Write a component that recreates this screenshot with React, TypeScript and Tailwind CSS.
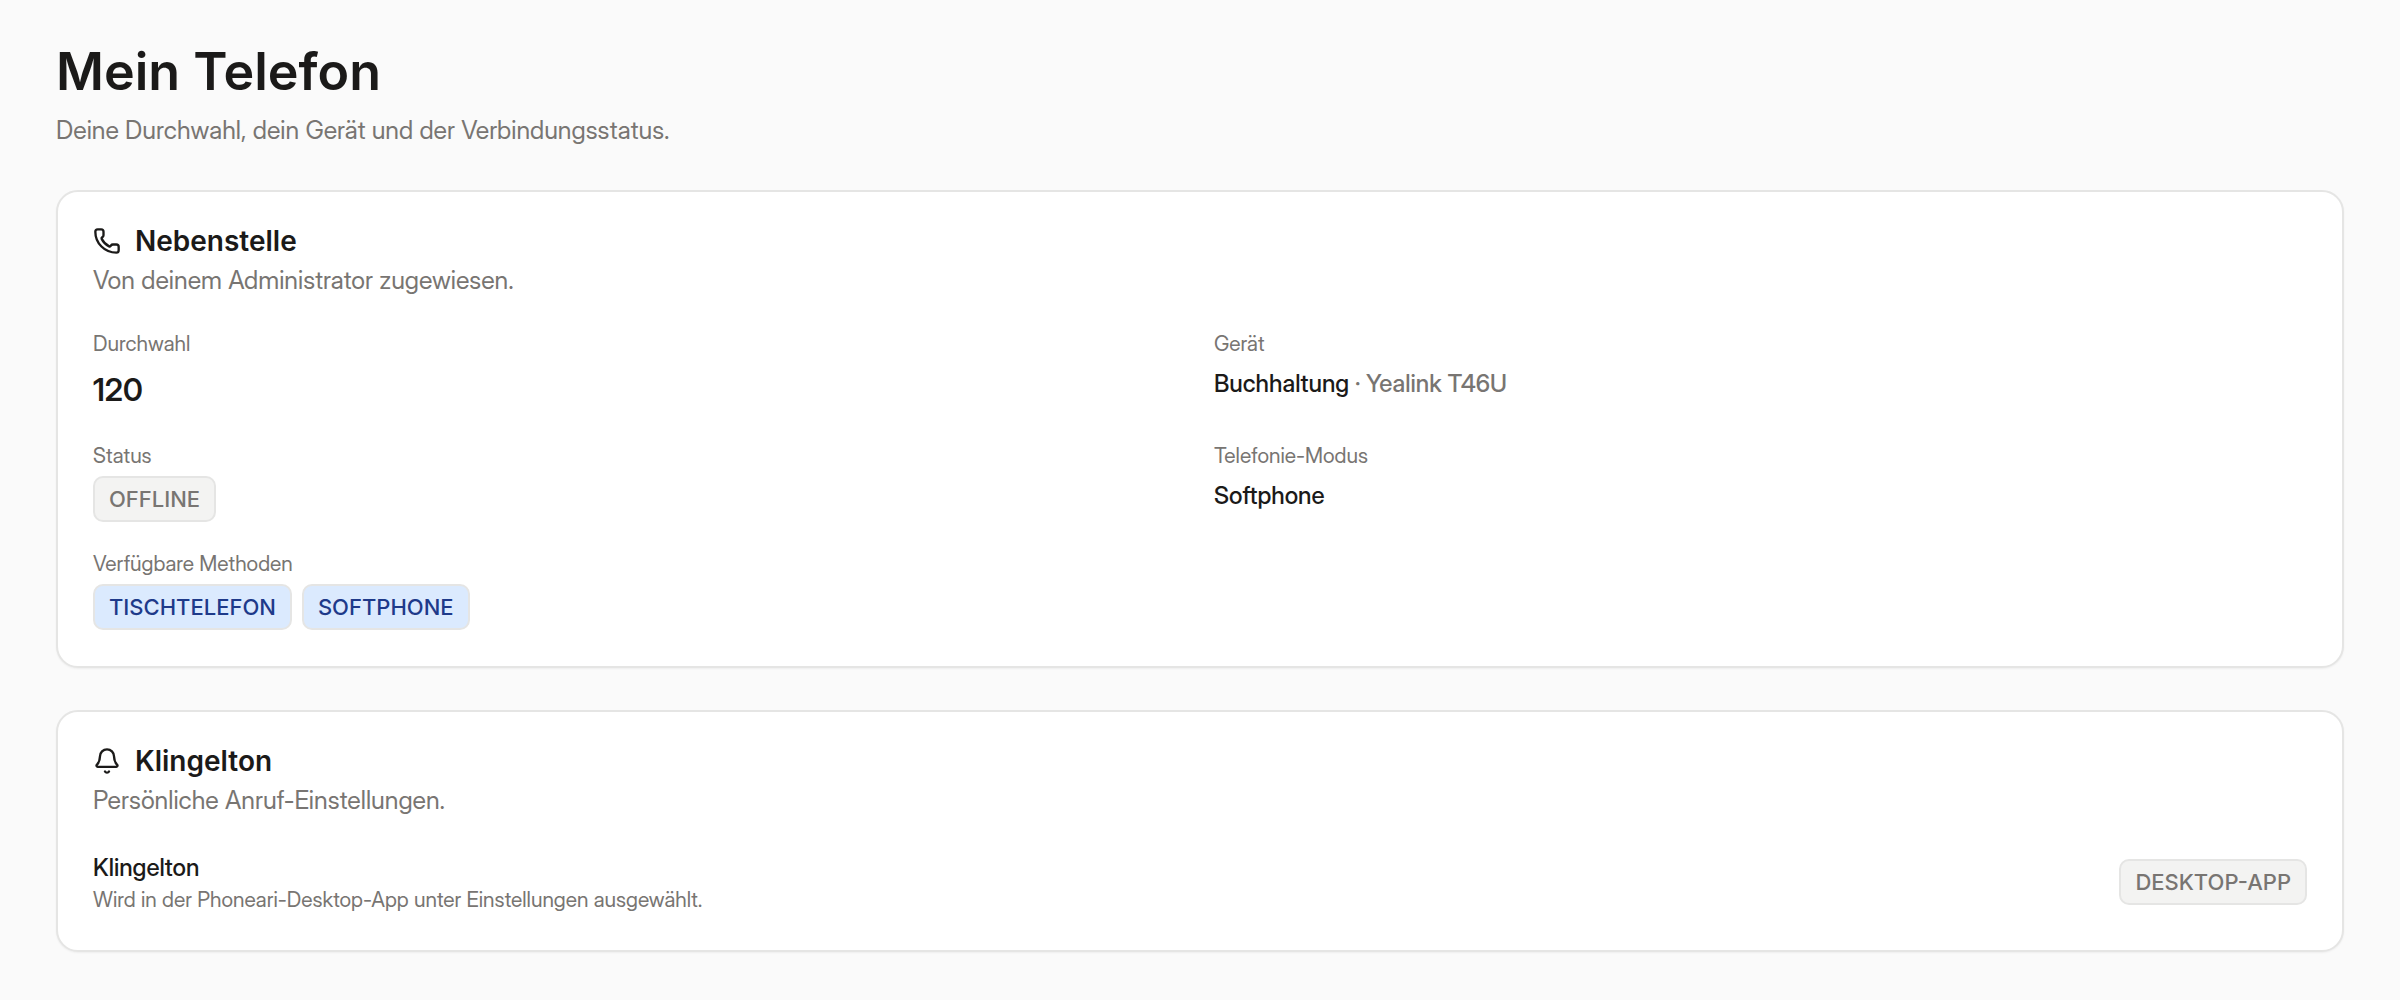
import type { ReactNode } from 'react'
import { Bell, Phone, type LucideIcon } from 'lucide-react'

const badgeTones = {
  muted: 'bg-[#f3f3f2] text-[#787572]',
  info: 'bg-[#dbeafe] text-[#1e3a8a]',
}

function Badge({ tone = 'muted', children }: { tone?: keyof typeof badgeTones; children: ReactNode }) {
  return (
    <span className={`inline-flex items-center rounded-[10px] border-2 border-[#e5e5e4] px-3.5 py-1.5 font-['Inter',sans-serif] text-[22px] leading-[30px] font-medium uppercase ${badgeTones[tone]}`}>
      {children}
    </span>
  )
}

function Card({ icon: Icon, title, description, children }: { icon: LucideIcon; title: string; description: string; children: ReactNode }) {
  return (
    <section className="rounded-[22px] border-2 border-[#e5e5e4] bg-white px-[35px] pt-[35px] pb-9 shadow-xs">
      <h2 className="flex items-center gap-3.5 font-['Inter',sans-serif] text-[28px] leading-7 font-semibold">
        <Icon className="size-7" strokeWidth={2} />
        {title}
      </h2>
      <p className="mt-[7px] text-[25px] leading-9 text-[#787572]">{description}</p>
      {children}
    </section>
  )
}

function Field({ label, children }: { label: string; children: ReactNode }) {
  return (
    <div>
      <dt className="text-[21px] leading-7 text-[#787572]">{label}</dt>
      {children}
    </div>
  )
}

export default function App() {
  return (
    <main className="min-h-screen bg-[#fafafa] px-14 pt-10 pb-12 font-['Inter_Display','Inter',sans-serif] text-[#1b1a19]">
      <header>
        <h1 className="font-['Inter',sans-serif] text-[52px] leading-16 font-semibold">Mein Telefon</h1>
        <p className="mt-2 text-[25px] leading-9 text-[#787572]">Deine Durchwahl, dein Gerät und der Verbindungsstatus.</p>
      </header>

      <div className="mt-[42px] flex flex-col gap-[42px]">
        <Card icon={Phone} title="Nebenstelle" description="Von deinem Administrator zugewiesen.">
          <dl className="mt-8 grid grid-cols-2 gap-7">
            <Field label="Durchwahl">
              <dd className="mt-2 text-[31px] leading-12 font-semibold">120</dd>
            </Field>
            <Field label="Gerät">
              <dd className="mt-2 text-2xl leading-9 font-medium">
                Buchhaltung <span className="text-[#787572]">· Yealink T46U</span>
              </dd>
            </Field>
            <Field label="Status">
              <dd className="mt-1.5 flex">
                <Badge>Offline</Badge>
              </dd>
            </Field>
            <Field label="Telefonie-Modus">
              <dd className="mt-2 text-2xl leading-9 font-medium">Softphone</dd>
            </Field>
            <Field label="Verfügbare Methoden">
              <dd className="mt-1.5 flex flex-wrap gap-2.5">
                <Badge tone="info">Tischtelefon</Badge>
                <Badge tone="info">Softphone</Badge>
              </dd>
            </Field>
          </dl>
        </Card>

        <Card icon={Bell} title="Klingelton" description="Persönliche Anruf-Einstellungen.">
          <div className="mt-8 flex items-center justify-between gap-8">
            <div>
              <p className="text-2xl leading-9 font-medium">Klingelton</p>
              <p className="text-[21px] leading-7 text-[#787572]">Wird in der Phoneari-Desktop-App unter Einstellungen ausgewählt.</p>
            </div>
            <Badge>Desktop-App</Badge>
          </div>
        </Card>
      </div>
    </main>
  )
}
